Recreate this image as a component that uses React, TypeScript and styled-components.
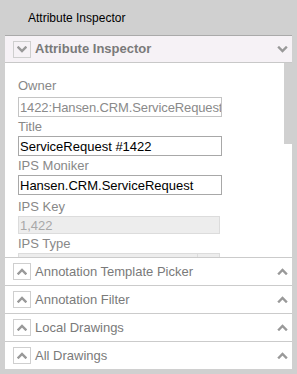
import React from 'react';
import styled, { createGlobalStyle } from 'styled-components';

const Global = createGlobalStyle`
  html, body { margin: 0; padding: 0; background: #d0d0d0; }
  body { font-family: "Liberation Sans", Arial, sans-serif; }
`;

const Page = styled.div`
  width: 297px;
  height: 374px;
  background: #d0d0d0;
  display: flex;
  flex-direction: column;
  overflow: hidden;
`;

const TitleBar = styled.div`
  height: 35px;
  box-sizing: border-box;
  padding: 11px 0 0 28px;
  font-size: 12px;
  line-height: 14px;
  color: #000;
`;

const Panel = styled.div`
  margin-left: 5px;
  width: 287px;
  height: 334px;
  display: flex;
  flex-direction: column;
  background: #fff;
`;

const Header = styled.div`
  height: 28px;
  box-sizing: border-box;
  border-top: 1px solid #aaa;
  border-bottom: 1px solid #c8c8c8;
  background: #f6f2f6;
  display: flex;
  align-items: center;
  padding: 0 4px 0 8px;
  flex-shrink: 0;
`;

const Row = styled.div`
  height: 28px;
  box-sizing: border-box;
  border-top: 1px solid #cbcbcb;
  background: #fff;
  display: flex;
  align-items: center;
  padding: 0 4px 0 8px;
  flex-shrink: 0;
`;

const IconBox = styled.div`
  width: 18px;
  height: 17px;
  box-sizing: border-box;
  border: 1px solid #cfcfcf;
  display: flex;
  align-items: center;
  justify-content: center;
  flex-shrink: 0;
`;

const SectionTitle = styled.div<{ $bold?: boolean }>`
  flex: 1;
  margin-left: 4px;
  font-size: 13px;
  line-height: 16px;
  color: #7a7a7a;
  font-weight: ${(p) => (p.$bold ? 700 : 400)};
  white-space: nowrap;
`;

const Body = styled.div`
  height: 194px;
  flex-shrink: 0;
  display: flex;
  overflow: hidden;
`;

const ScrollArea = styled.div`
  flex: 1;
  overflow: hidden;
`;

const ScrollTrack = styled.div`
  width: 8px;
  flex-shrink: 0;
  background: #fff;
`;

const ScrollThumb = styled.div`
  height: 81px;
  background: #d0d0d0;
`;

const Form = styled.div`
  box-sizing: border-box;
  padding: 15px 0 0 13px;
  display: flex;
  flex-direction: column;
`;

const Field = styled.div`
  height: 39px;
  display: flex;
  flex-direction: column;
  justify-content: flex-end;
  gap: 1px;
  flex-shrink: 0;
  &:first-child {
    justify-content: space-between;
  }
`;

const Label = styled.div`
  font-size: 13px;
  line-height: 16px;
  color: #888;
`;

type Variant = 'readonly' | 'edit' | 'disabled';

const textColor = (v: Variant) => (v === 'edit' ? '#000' : v === 'readonly' ? '#8a8a8a' : '#a8a8a8');

const TextBox = styled.input<{ $variant: Variant }>`
  box-sizing: border-box;
  width: ${(p) => (p.$variant === 'disabled' ? 202 : 204)}px;
  height: ${(p) => (p.$variant === 'disabled' ? 18 : 20)}px;
  margin: 0;
  padding: 0 0 0 1px;
  font-family: "Liberation Sans", Arial, sans-serif;
  font-size: 13px;
  letter-spacing: ${(p) => (p.$variant === 'readonly' ? '-0.12px' : '0')};
  outline: none;
  border: 1px solid
    ${(p) => (p.$variant === 'edit' ? '#a8a8a8' : p.$variant === 'readonly' ? '#c4c4c4' : '#dcdcdc')};
  background: ${(p) => (p.$variant === 'disabled' ? '#ededed' : '#fff')};
  color: ${(p) => textColor(p.$variant)};
  -webkit-text-fill-color: ${(p) => textColor(p.$variant)};
  opacity: 1;
`;

const SelectBox = styled.div`
  box-sizing: border-box;
  width: 202px;
  height: 20px;
  flex-shrink: 0;
  border: 1px solid #dcdcdc;
  background: #ededed;
  display: flex;
`;

const SelectValue = styled.div`
  flex: 1;
`;

const SelectArrow = styled.div`
  width: 21px;
  border-left: 1px solid #dcdcdc;
`;

const Chevron = ({ up, small }: { up?: boolean; small?: boolean }) => {
  const w = small ? 10 : 11;
  const pts = up ? '1.5,5.5 5,2 8.5,5.5' : '1.5,1.5 5,5 8.5,1.5';
  return (
    <svg width={w} height={7} viewBox="0 0 10 7" aria-hidden="true">
      <polyline points={pts} fill="none" stroke="#999" strokeWidth="2.4" strokeLinecap="square" strokeLinejoin="miter" />
    </svg>
  );
};

const Section = ({ title }: { title: string }) => (
  <Row>
    <IconBox>
      <Chevron up small />
    </IconBox>
    <SectionTitle>{title}</SectionTitle>
    <Chevron up />
  </Row>
);

export default function App() {
  return (
    <>
      <Global />
      <Page>
        <TitleBar>Attribute Inspector</TitleBar>
        <Panel>
          <Header>
            <IconBox>
              <Chevron small />
            </IconBox>
            <SectionTitle $bold>Attribute Inspector</SectionTitle>
            <Chevron />
          </Header>
          <Body>
            <ScrollArea>
              <Form>
                <Field>
                  <Label>Owner</Label>
                  <TextBox $variant="readonly" readOnly value="1422:Hansen.CRM.ServiceRequest" />
                </Field>
                <Field>
                  <Label>Title</Label>
                  <TextBox $variant="edit" readOnly value="ServiceRequest #1422" />
                </Field>
                <Field>
                  <Label>IPS Moniker</Label>
                  <TextBox $variant="edit" readOnly value="Hansen.CRM.ServiceRequest" />
                </Field>
                <Field>
                  <Label>IPS Key</Label>
                  <TextBox $variant="disabled" disabled value="1,422" />
                </Field>
                <Field>
                  <Label>IPS Type</Label>
                  <SelectBox>
                    <SelectValue />
                    <SelectArrow />
                  </SelectBox>
                </Field>
              </Form>
            </ScrollArea>
            <ScrollTrack>
              <ScrollThumb />
            </ScrollTrack>
          </Body>
          <Section title="Annotation Template Picker" />
          <Section title="Annotation Filter" />
          <Section title="Local Drawings" />
          <Section title="All Drawings" />
        </Panel>
      </Page>
    </>
  );
}
